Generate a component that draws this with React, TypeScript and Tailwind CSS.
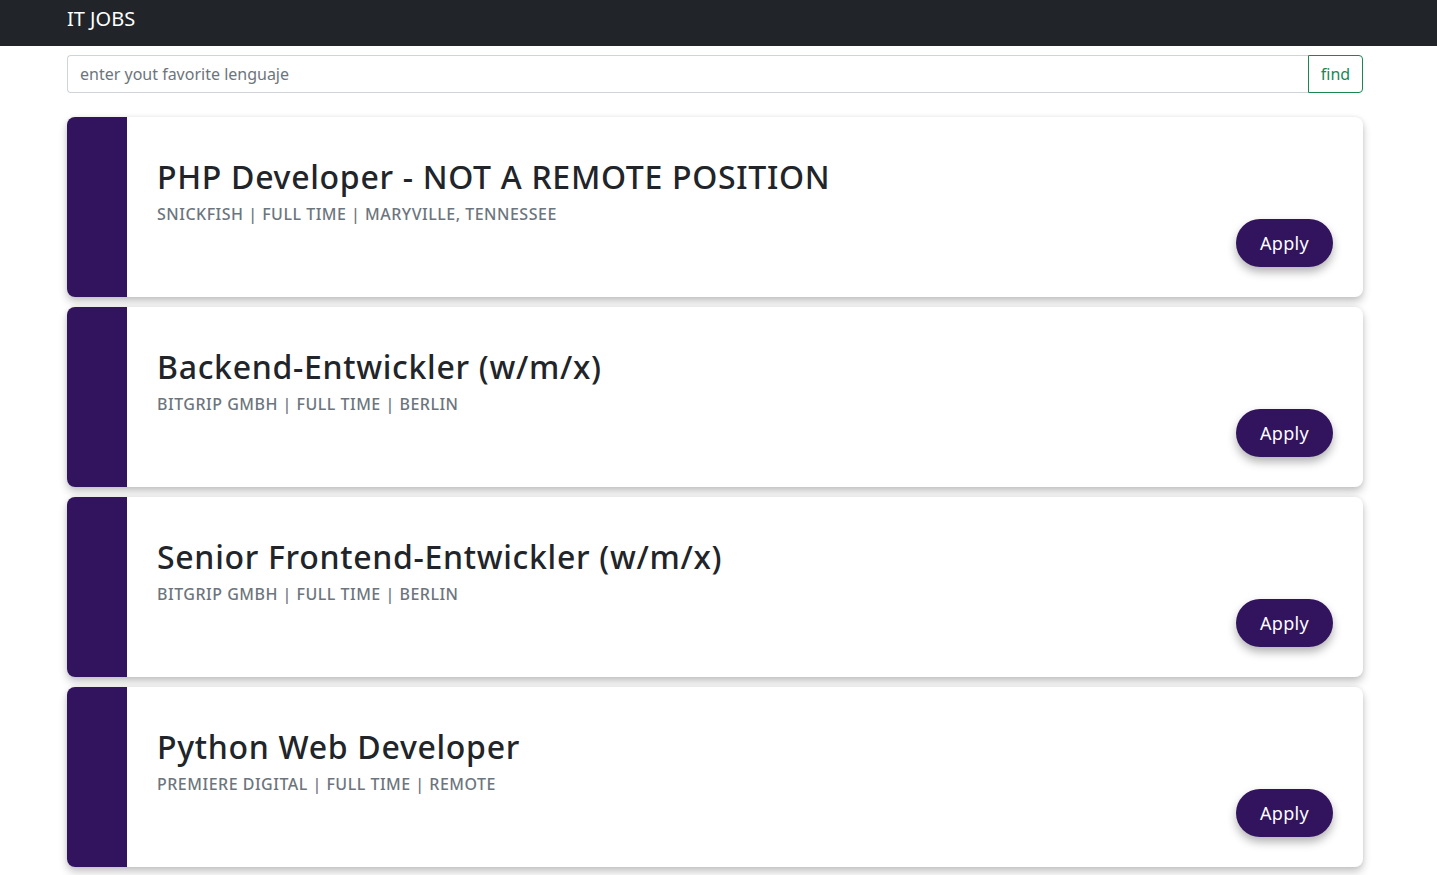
import React from 'react';

const jobs = [
  { title: 'PHP Developer - NOT A REMOTE POSITION', meta: 'Snickfish | Full Time | Maryville, Tennessee' },
  { title: 'Backend-Entwickler (w/m/x)', meta: 'BitGrip GmbH | Full Time | Berlin' },
  { title: 'Senior Frontend-Entwickler (w/m/x)', meta: 'BitGrip GmbH | Full Time | Berlin' },
  { title: 'Python Web Developer', meta: 'Premiere Digital | Full Time | Remote' },
];

const JobCard: React.FC<{ title: string; meta: string }> = ({ title, meta }) => (
  <div className="flex h-[180px] overflow-hidden rounded-lg bg-white shadow-[0_5px_8px_rgba(0,0,0,0.22),0_0_4px_rgba(0,0,0,0.08)]">
    <div className="w-[60px] shrink-0 bg-[#32135e]" />
    <div className="flex flex-1 justify-between px-[30px]">
      <div className="pt-[41px]">
        <h2 className="text-[32px] leading-[38px] font-medium tracking-[0.7px] text-[#212529]">{title}</h2>
        <p className="mt-[6px] text-[16px] leading-6 font-medium uppercase tracking-[0.5px] text-[#6c757d]">{meta}</p>
      </div>
      <button className="mb-[30px] h-[48px] w-[97px] self-end rounded-full bg-[#32135e] text-[18px] tracking-[0.3px] text-white shadow-[0_5px_10px_rgba(0,0,0,0.3)]">
        Apply
      </button>
    </div>
  </div>
);

export default function App() {
  return (
    <div className="min-h-screen bg-white font-['Noto_Sans',sans-serif]">
      <header className="h-[46px] bg-[#212529]">
        <div className="ml-[67px] pt-[5px]">
          <span className="text-[20px] leading-[28px] text-white">IT JOBS</span>
        </div>
      </header>

      <main className="ml-[67px] w-[1296px]">
        {/* search */}
        <div className="mt-[9px] flex h-[38px]">
          <input
            className="flex-1 rounded-l-[4px] border border-r-0 border-[#ced4da] px-3 text-[16px] text-[#212529] placeholder:text-[#6c757d] outline-none"
            placeholder="enter yout favorite lenguaje"
          />
          <button className="w-[55px] rounded-r-[4px] border border-[#198754] text-[16px] text-[#198754]">find</button>
        </div>

        <div className="mt-[24px] flex flex-col gap-[10px] pb-4">
          {jobs.map((job) => (
            <JobCard key={job.title} title={job.title} meta={job.meta} />
          ))}
        </div>
      </main>
    </div>
  );
}
